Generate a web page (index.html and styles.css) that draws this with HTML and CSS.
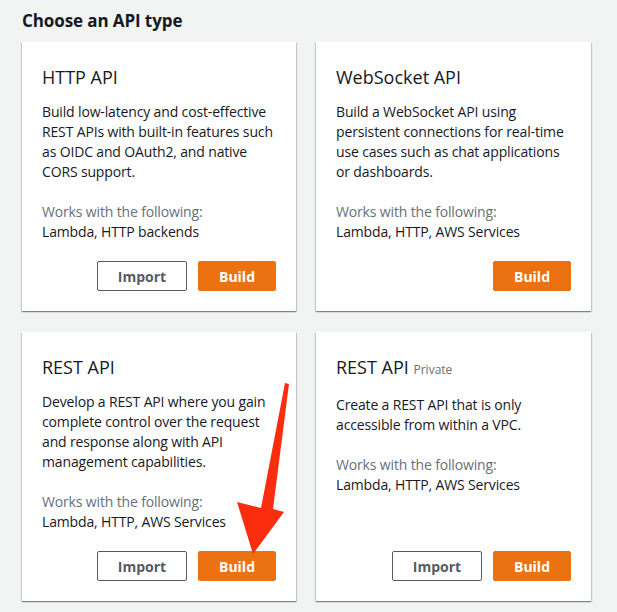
FILE: index.html
```html
<!DOCTYPE html>
<html>
<head>
<meta charset="utf-8">
<link rel="stylesheet" href="styles.css">
</head>
<body>
<div class="page">
  <h2 class="heading">Choose an API type</h2>
  <div class="grid">
    <div class="card">
      <h3 class="card-title">HTTP API</h3>
      <p class="card-desc">Build low-latency and cost-effective REST APIs with built-in features such as OIDC and OAuth2, and native CORS support.</p>
      <p class="works-label">Works with the following:</p>
      <p class="works-list">Lambda, HTTP backends</p>
      <div class="actions">
        <button class="btn btn-normal">Import</button>
        <button class="btn btn-primary">Build</button>
      </div>
    </div>
    <div class="card">
      <h3 class="card-title">WebSocket API</h3>
      <p class="card-desc">Build a WebSocket API using persistent connections for real-time use cases such as chat applications or dashboards.</p>
      <p class="works-label">Works with the following:</p>
      <p class="works-list">Lambda, HTTP, AWS Services</p>
      <div class="actions">
        <button class="btn btn-primary">Build</button>
      </div>
    </div>
    <div class="card">
      <h3 class="card-title">REST API</h3>
      <p class="card-desc">Develop a REST API where you gain complete control over the request and response along with API management capabilities.</p>
      <p class="works-label">Works with the following:</p>
      <p class="works-list">Lambda, HTTP, AWS Services</p>
      <div class="actions">
        <button class="btn btn-normal">Import</button>
        <button class="btn btn-primary">Build</button>
      </div>
    </div>
    <div class="card">
      <h3 class="card-title">REST API <span class="tag">Private</span></h3>
      <p class="card-desc">Create a REST API that is only accessible from within a VPC.</p>
      <p class="works-label">Works with the following:</p>
      <p class="works-list">Lambda, HTTP, AWS Services</p>
      <div class="actions">
        <button class="btn btn-normal">Import</button>
        <button class="btn btn-primary">Build</button>
      </div>
    </div>
  </div>
  <svg class="arrow" width="617" height="612" viewBox="0 0 617 612">
    <polygon points="285,383 289,384 273,509 284,512 253,554 237,502 261,508" fill="#fa2d0f"/>
  </svg>
</div>
</body>
</html>
```

FILE: styles.css
```css
* { box-sizing: border-box; }
html, body {
  margin: 0;
  padding: 0;
  background: #f2f3f3;
}
body {
  font-family: "Open Sans", "Noto Sans", sans-serif;
  color: #16191f;
  width: 617px;
  height: 612px;
  overflow: hidden;
}
.page {
  position: relative;
  padding: 10px 26px 0 22px;
}
.heading {
  margin: 0 0 10px;
  font-size: 17px;
  line-height: 22px;
  font-weight: 700;
  letter-spacing: -0.1px;
  color: #16191f;
}
.grid {
  display: grid;
  grid-template-columns: 274px 275px;
  column-gap: 20px;
  row-gap: 21px;
}
.card {
  background: #fff;
  height: 269px;
  padding: 22px 20px 20px;
  display: flex;
  flex-direction: column;
  box-shadow: 0 1px 1px 0 rgba(0,28,36,0.3), 1px 1px 1px 0 rgba(0,28,36,0.15), -1px 1px 1px 0 rgba(0,28,36,0.15);
}
.card-title {
  margin: 0;
  font-size: 18px;
  line-height: 26px;
  font-weight: 400;
}
.tag {
  font-size: 12px;
  color: #687078;
}
.card-desc {
  margin: 12px 0 20px;
  font-size: 14px;
  line-height: 20px;
  letter-spacing: -0.15px;
}
.works-label {
  margin: 0;
  font-size: 14px;
  line-height: 20px;
  letter-spacing: -0.15px;
  color: #687078;
}
.works-list {
  margin: 0;
  font-size: 14px;
  line-height: 20px;
  letter-spacing: -0.15px;
}
.actions {
  margin-top: auto;
  display: flex;
  justify-content: flex-end;
  gap: 11px;
}
.btn {
  height: 30px;
  border-radius: 2px;
  font-family: inherit;
  font-size: 14px;
  font-weight: 700;
  padding: 0;
  cursor: pointer;
}
.btn-normal {
  width: 90px;
  background: #fff;
  color: #545b64;
  border: 1px solid #545b64;
}
.btn-primary {
  width: 78px;
  background: #ec7211;
  color: #fff;
  border: 1px solid #ec7211;
}
.arrow {
  position: absolute;
  left: 0;
  top: 0;
  pointer-events: none;
}
```
